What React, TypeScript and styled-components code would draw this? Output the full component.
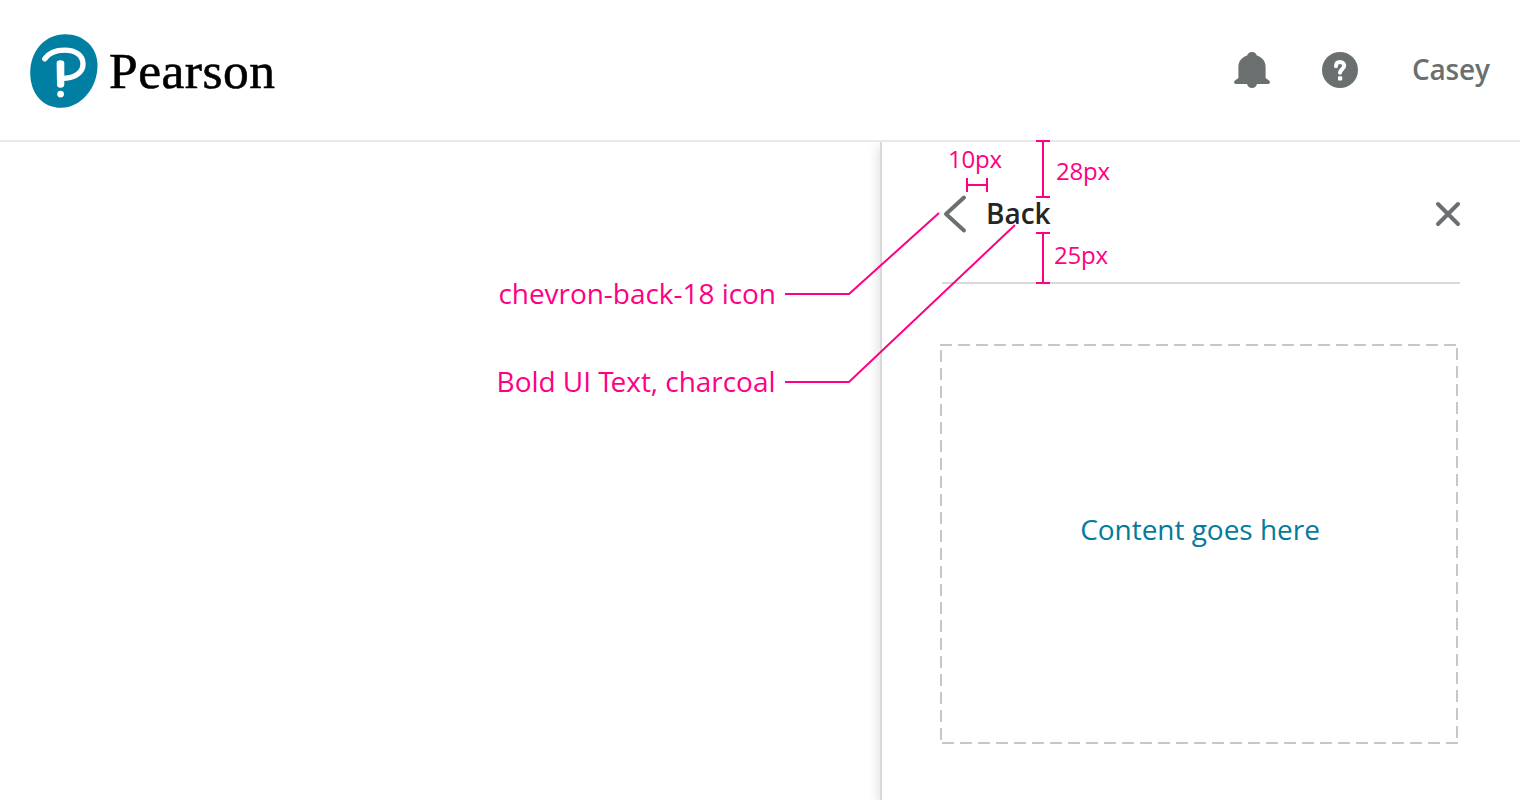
import React from "react";
import styled, { createGlobalStyle } from "styled-components";

const PINK = "#ff0084";
const SLATE = "#6a7070";

const GlobalStyle = createGlobalStyle`
  * { box-sizing: border-box; }
  body { margin: 0; background: #fff; font-family: "Open Sans", sans-serif; }
`;

const Page = styled.div`
  position: relative;
  display: flex;
  flex-direction: column;
  width: 1520px;
  height: 800px;
  overflow: hidden;
  background: #fff;
`;

const Header = styled.header`
  position: relative;
  z-index: 1;
  display: flex;
  align-items: center;
  justify-content: space-between;
  flex: none;
  height: 142px;
  padding: 0 30px;
  background: #fff;
  border-bottom: 2px solid #e9e9e9;
`;

const Brand = styled.div`
  display: flex;
  align-items: center;
  gap: 11px;
  padding-top: 2px;
`;

const Wordmark = styled.span`
  font: 400 51.5px/60px "Liberation Serif", serif;
  letter-spacing: 0.5px;
  color: #000;
  -webkit-text-stroke: 0.6px #000;
`;

const Tools = styled.nav`
  display: flex;
  align-items: center;
`;

const ToolIcon = styled.svg<{ $gap: number }>`
  display: block;
  width: 36px;
  height: 36px;
  margin-right: ${(p) => p.$gap}px;
  fill: ${SLATE};
`;

const UserName = styled.span`
  width: 78px;
  margin-bottom: 2px;
  font-size: 28px;
  line-height: 38px;
  font-weight: 600;
  letter-spacing: -0.2px;
  color: ${SLATE};
`;

const Main = styled.main`
  display: flex;
  justify-content: flex-end;
  flex: 1;
`;

const Drawer = styled.aside`
  width: 640px;
  padding: 0 60px 0 58px;
  background: #fff;
  border-left: 2px solid #d9d9d9;
  box-shadow: 0 4px 12px rgba(0, 0, 0, 0.16);
`;

const DrawerHeader = styled.div`
  display: flex;
  align-items: center;
  height: 142px;
  margin-left: 2px;
  border-bottom: 2px solid #d9d9d9;
`;

const Chevron = styled.svg`
  display: block;
  width: 26px;
  height: 40px;
  margin-top: 4px;
`;

const BackLabel = styled.span`
  flex: 1;
  margin: 2px 0 0 18px;
  font-size: 28px;
  line-height: 38px;
  font-weight: 600;
  color: #252525;
`;

const Close = styled.svg`
  display: block;
  width: 26px;
  height: 26px;
  margin: 4px -1px 0 0;
`;

const ContentSlot = styled.section`
  position: relative;
  display: flex;
  align-items: center;
  justify-content: center;
  width: 518px;
  height: 400px;
  margin-top: 60px;
  padding: 0 0 30px 2px;
  font-size: 28px;
  line-height: 38px;
  letter-spacing: -0.03px;
  color: #047a9c;
`;

const Overlay = styled.svg`
  position: absolute;
  inset: 0;
  width: 100%;
  height: 100%;
  z-index: 2;
  fill: none;
  pointer-events: none;
`;

const Note = styled.span<{ $x: number; $y: number; $size: number }>`
  position: absolute;
  z-index: 2;
  left: ${(p) => p.$x}px;
  top: ${(p) => p.$y}px;
  font-size: ${(p) => p.$size}px;
  line-height: 38px;
  letter-spacing: ${(p) => (p.$size < 28 ? -0.2 : -0.04)}px;
  white-space: nowrap;
  color: ${PINK};
`;

const Kerned = styled.span`
  letter-spacing: -3px;
`;

export default function App() {
  return (
    <>
      <GlobalStyle />
      <Page>
        <Header>
          <Brand>
            <svg width="68" height="74" viewBox="0 0 68 74">
              <path fill="#007fa3" d="M35 0.3C54 0.3 67.5 13.5 67.5 31.5C67.5 54 51 73.8 31 73.8C12 73.8 0.2 59 0.2 38.5C0.2 17 15 0.3 35 0.3Z" />
              <path fill="none" stroke="#fff" strokeWidth="5.4" strokeLinecap="round" d="M14.8 24.8C19 18.6 26 16.1 34.5 16.1C46 16.1 53 21.8 53 30C53 39.5 43.5 44.2 32 44.4" />
              <path fill="#fff" d="M26.6 28.8Q26.7 26.3 30.2 26.3Q34.3 26.3 34.3 28.8V50.5Q34 53.8 30.5 53.8Q27 53.8 27 50.5Z" />
              <circle cx="30.6" cy="60.1" r="3.4" fill="#fff" />
            </svg>
            <Wordmark>Pearson</Wordmark>
          </Brand>
          <Tools>
            <ToolIcon $gap={52} viewBox="0 0 36 36">
              <path d="M18 0C20.6 0 22.3 1.5 22.9 3.6C28.2 5.4 31.6 9.4 31.6 15.2V26L35.3 28.7Q36 29.3 36 30.2Q36 32 34 32H23Q21.8 36 18 36Q14.2 36 13 32H2Q0 32 0 30.2Q0 29.3 .7 28.7L4.4 26V15.2C4.4 9.4 7.8 5.4 13.1 3.6C13.7 1.5 15.4 0 18 0Z" />
            </ToolIcon>
            <ToolIcon $gap={54} viewBox="0 0 36 36">
              <circle cx="18" cy="18" r="18" />
              <path fill="none" stroke="#fff" strokeWidth="4" strokeLinecap="round" d="M14 14.3C14 11.2 15.8 10 18 10C20.4 10 22.2 11.5 22.2 13.8C22.2 17.2 18 17 18 20.8" />
              <rect x="16" y="24.2" width="4.2" height="4.2" rx="1" fill="#fff" />
            </ToolIcon>
            <UserName>Casey</UserName>
          </Tools>
        </Header>
        <Main>
          <Drawer>
            <DrawerHeader>
              <Chevron viewBox="0 0 26 40" fill="none" stroke={SLATE} strokeWidth="4" strokeLinecap="round" strokeLinejoin="round">
                <path d="M22 3.5L4 20L22 36.5" />
              </Chevron>
              <BackLabel>Back</BackLabel>
              <Close viewBox="0 0 26 26" stroke={SLATE} strokeWidth="4" strokeLinecap="round">
                <path d="M3 3L23 23M23 3L3 23" />
              </Close>
            </DrawerHeader>
            <ContentSlot>
              <Overlay viewBox="0 0 518 400" stroke="#c7c7c7" strokeWidth="2" strokeDasharray="12 6">
                <path d="M0 1H518M517 4V400M518 399H0M1 6V400" />
              </Overlay>
              Content goes here
            </ContentSlot>
          </Drawer>
        </Main>
        <Overlay viewBox="0 0 1520 800" stroke={PINK} strokeWidth="2">
          <path d="M967 178V192M987 178V192M967 185H987" />
          <path d="M1036 141H1050M1036 197H1050M1043 141V197" />
          <path d="M1036 233H1050M1036 283H1050M1043 233V283" />
          <path d="M785 294H849L939 213" />
          <path d="M785 382H849L1015 225" />
        </Overlay>
        <Note $x={948} $y={140} $size={24}>10px</Note>
        <Note $x={1056} $y={152} $size={24}>28px</Note>
        <Note $x={1054} $y={236} $size={24}>25px</Note>
        <Note $x={498.4} $y={274} $size={28}>chevron-back-18 icon</Note>
        <Note $x={496.6} $y={362} $size={28}>
          Bold UI <Kerned>T</Kerned>ext, charcoal
        </Note>
      </Page>
    </>
  );
}
